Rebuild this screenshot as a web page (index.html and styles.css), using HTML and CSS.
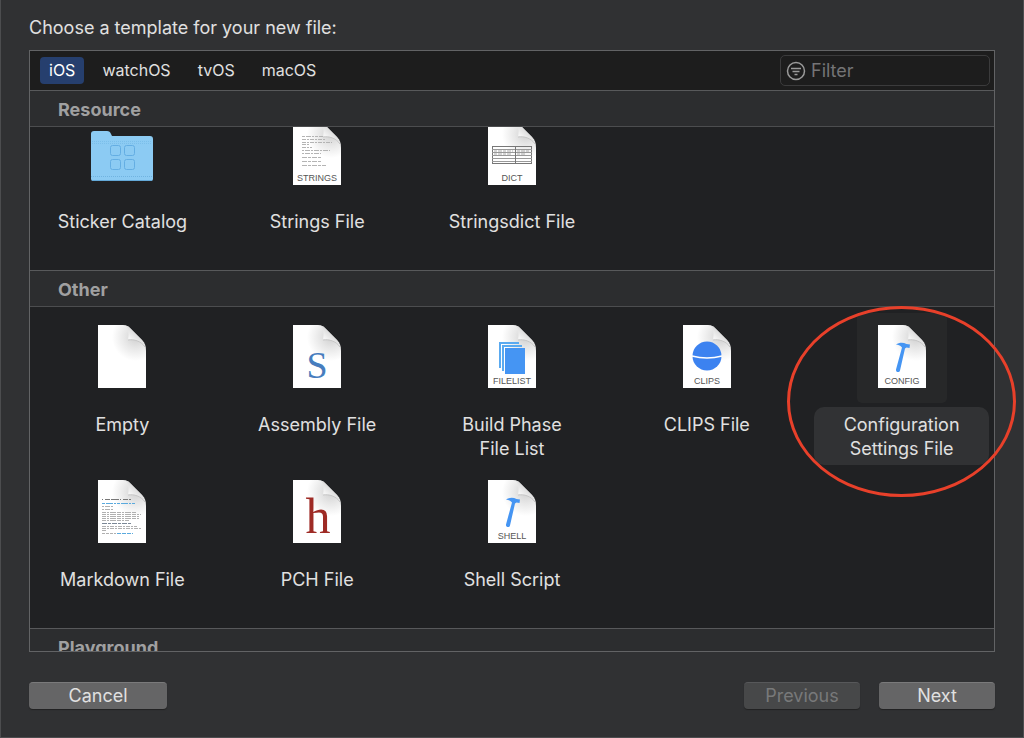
FILE: index.html
```html
<!DOCTYPE html>
<html lang="en">
<head>
<meta charset="utf-8">
<title>New File</title>
<link rel="stylesheet" href="styles.css">
</head>
<body>
<svg class="defs" aria-hidden="true">
  <defs>
    <linearGradient id="curl" x1="0" y1="1" x2="0.6" y2="0.3">
      <stop offset="0" stop-color="#ffffff"/>
      <stop offset="0.5" stop-color="#f4f4f4"/>
      <stop offset="1" stop-color="#d6d6d6"/>
    </linearGradient>
    <radialGradient id="shade" gradientUnits="userSpaceOnUse" cx="38" cy="12" r="24">
      <stop offset="0" stop-color="#cfcfcf"/>
      <stop offset="0.45" stop-color="#e6e6e6"/>
      <stop offset="1" stop-color="#ffffff"/>
    </radialGradient>
    <symbol id="page" viewBox="0 0 48 63">
      <path d="M0 0H25C29 0 31 2 33 4L44 15C47 18 48 21 48 26V63H0Z" fill="url(#shade)"/>
      <path d="M28 1C31 4 31 10 30 15C36 14 43 16 47 22C46 18 45 16 43 14L33 4C31 2 30 1 28 1Z" fill="url(#curl)"/>
      <path d="M30 15C36 14 43 16 47 22" fill="none" stroke="#c6c6c6" stroke-width="1"/>
    </symbol>
    <symbol id="hammer" viewBox="0 0 16 31">
      <path d="M1 2.500C4 0.500 8 0 11.500 2L15 2.500L14.500 6L11.500 5.500L10 6.500L5 28.500C4.500 31 0.500 30.500 1 27.500L7 5.500C5 3 3 3 1 2.500Z" fill="#4595f3"/>
    </symbol>
  </defs>
</svg>
<main class="dialog">
  <h1 class="title">Choose a template for your new file:</h1>
  <section class="panel">
    <div class="toolbar">
      <nav class="tabs">
        <button class="tab tab-active">iOS</button>
        <button class="tab">watchOS</button>
        <button class="tab">tvOS</button>
        <button class="tab">macOS</button>
      </nav>
      <label class="filter">
        <svg class="filter-icon" viewBox="0 0 20 20" aria-hidden="true">
          <circle cx="10" cy="10" r="8.5"/>
          <path d="M5 7.5H15M6.5 10.5H13.5M8.5 13.5H11.5"/>
        </svg>
        <input class="filter-input" type="text" placeholder="Filter" aria-label="Filter">
      </label>
    </div>

    <h2 class="heading">Resource</h2>
    <div class="group">
      <div class="grid grid-scrolled">
        <button class="tile">
          <span class="art">
            <svg class="folder" viewBox="0 0 64 50">
              <path d="M1 48V3Q1 0 4 0H17Q20 0 21 3L22 5H60Q63 5 63 8V48Q63 50 61 50H3Q1 50 1 48Z" fill="#8ccbf3"/>
              <path d="M2 10.500H62M2 12.500H62" stroke="#7bbfea" stroke-width="1" stroke-dasharray="1 1"/>
              <path d="M1 45.500H63" stroke="#70b3e0" stroke-width="1" stroke-dasharray="1 1"/>
              <path d="M2 49.500H62" stroke="#64a9d8" stroke-width="1"/>
              <g fill="none" stroke="#64aee3" stroke-width="1">
                <rect x="20.500" y="14.500" width="10" height="10" rx="2"/>
                <rect x="34.500" y="14.500" width="10" height="10" rx="2"/>
                <rect x="20.500" y="28.500" width="10" height="10" rx="2"/>
                <rect x="34.500" y="28.500" width="10" height="10" rx="2"/>
              </g>
            </svg>
          </span>
          <span class="label">Sticker Catalog</span>
        </button>
        <button class="tile">
          <span class="art">
            <svg class="doc" viewBox="0 0 48 63">
              <use href="#page" width="48" height="63"/>
              <g fill="none" stroke="#b4b4b4" stroke-width="1">
                <path d="M9 14.500H30" stroke-dasharray="3 1 5 1 2 1"/>
                <path d="M9 17.500H32M9 20.500H39M9 22.500H17M9 25.500H19" stroke-dasharray="4 1 2 1"/>
                <path d="M9 28.500H37M9 31.500H28" stroke-dasharray="2 1 5 1"/>
                <path d="M9 35.500H29M9 39.500H28M9 43.500H33" stroke-dasharray="5 1 3 1"/>
              </g>
              <text class="tag" x="24" y="59">STRINGS</text>
            </svg>
          </span>
          <span class="label">Strings File</span>
        </button>
        <button class="tile">
          <span class="art">
            <svg class="doc" viewBox="0 0 48 63">
              <use href="#page" width="48" height="63"/>
              <g fill="none" stroke="#777" stroke-width="1">
                <rect x="4.500" y="24.500" width="39" height="17"/>
                <path d="M4 27.500H44M4 30.500H44M4 33.500H44M4 36.500H44M4 39.500H44" stroke="#999"/>
                <path d="M27.500 24V42"/>
                <path d="M6 29H25M6 32H24M29 29H42M29 32H37" stroke="#aaa" stroke-dasharray="3 1 4 1"/>
              </g>
              <text class="tag" x="24" y="59">DICT</text>
            </svg>
          </span>
          <span class="label">Stringsdict File</span>
        </button>
      </div>
    </div>

    <h2 class="heading">Other</h2>
    <div class="group">
      <div class="grid">
        <button class="tile">
          <span class="art">
            <svg class="doc" viewBox="0 0 48 63"><use href="#page" width="48" height="63"/></svg>
          </span>
          <span class="label">Empty</span>
        </button>
        <button class="tile">
          <span class="art">
            <svg class="doc" viewBox="0 0 48 63">
              <use href="#page" width="48" height="63"/>
              <text class="letter letter-s" x="24" y="53">S</text>
            </svg>
          </span>
          <span class="label">Assembly File</span>
        </button>
        <button class="tile">
          <span class="art">
            <svg class="doc" viewBox="0 0 48 63">
              <use href="#page" width="48" height="63"/>
              <path d="M12 43V18H31M15 46V21H34" fill="none" stroke="#5aaaf0" stroke-width="2"/>
              <rect x="17" y="23" width="20" height="26" fill="#4595f3"/>
              <text class="tag" x="24" y="59">FILELIST</text>
            </svg>
          </span>
          <span class="label">Build Phase<br>File List</span>
        </button>
        <button class="tile">
          <span class="art">
            <svg class="doc" viewBox="0 0 48 63">
              <use href="#page" width="48" height="63"/>
              <circle cx="24" cy="31" r="14.500" fill="#3c82f0"/>
              <path d="M9 31Q24 35 39 31" fill="none" stroke="#fff" stroke-width="1.500"/>
              <text class="tag" x="24" y="59">CLIPS</text>
            </svg>
          </span>
          <span class="label">CLIPS File</span>
        </button>
        <button class="tile tile-selected">
          <span class="art">
            <svg class="doc" viewBox="0 0 48 63">
              <use href="#page" width="48" height="63"/>
              <use href="#hammer" x="17" y="17" width="16" height="31"/>
              <text class="tag" x="24" y="59">CONFIG</text>
            </svg>
          </span>
          <span class="label">Configuration<br>Settings File</span>
        </button>
        <button class="tile">
          <span class="art">
            <svg class="doc" viewBox="0 0 48 63">
              <use href="#page" width="48" height="63"/>
              <g fill="none" stroke="#b0b0b0" stroke-width="1">
                <path d="M4 19.500H33" stroke="#777" stroke-dasharray="1 2 5 1 8 1"/>
                <path d="M4 23.500H37" stroke="#5aaade" stroke-dasharray="3 1 7 1 2 1"/>
                <path d="M4 26.500H15M4 29.500H15" stroke-dasharray="2 1 5 1"/>
                <path d="M4 32.500H39M4 34.500H43M4 36.500H42M4 38.500H41M4 40.500H31" stroke-dasharray="4 1 2 1 6 1"/>
                <path d="M4 43.500H34" stroke="#7b8896" stroke-dasharray="5 1 3 1"/>
                <path d="M4 46.500H39M4 48.500H43M4 50.500H9" stroke-dasharray="4 1 2 1"/>
                <path d="M4 53.500H18" stroke-dasharray="3 1"/>
                <path d="M19 53.500H35" stroke="#5aaade" stroke-dasharray="4 1"/>
              </g>
            </svg>
          </span>
          <span class="label">Markdown File</span>
        </button>
        <button class="tile">
          <span class="art">
            <svg class="doc" viewBox="0 0 48 63">
              <use href="#page" width="48" height="63"/>
              <text class="letter letter-h" x="25" y="53">h</text>
            </svg>
          </span>
          <span class="label">PCH File</span>
        </button>
        <button class="tile">
          <span class="art">
            <svg class="doc" viewBox="0 0 48 63">
              <use href="#page" width="48" height="63"/>
              <use href="#hammer" x="17" y="17" width="16" height="31"/>
              <text class="tag" x="24" y="59">SHELL</text>
            </svg>
          </span>
          <span class="label">Shell Script</span>
        </button>
      </div>
    </div>

    <h2 class="heading">Playground</h2>
  </section>
  <footer class="footer">
    <button class="action action-cancel">Cancel</button>
    <button class="action" disabled>Previous</button>
    <button class="action">Next</button>
  </footer>
  <div class="marker"></div>
</main>
</body>
</html>
```

FILE: styles.css
```css
* {
  box-sizing: border-box;
}

body {
  margin: 0;
  background: #303133;
  color: #e0e0e0;
  font-family: Inter, "Liberation Sans", sans-serif;
  font-size: 18px;
  line-height: 24px;
}

button,
input {
  border: 0;
  padding: 0;
  background: none;
  color: inherit;
  font: inherit;
}

.defs {
  position: absolute;
  width: 0;
  height: 0;
}

.dialog {
  position: relative;
  display: flex;
  flex-direction: column;
  height: 100vh;
  min-width: 900px;
  padding: 16px 28px 28px;
  border: 1px solid #4c4d4f;
  border-top: 0;
}

.title {
  margin: 0 0 10px;
  font-size: 18px;
  font-weight: 400;
}

.panel {
  flex: 1;
  min-height: 0;
  overflow: hidden;
  border: 1px solid #626365;
  background: #202123;
}

.toolbar {
  display: flex;
  align-items: center;
  justify-content: space-between;
  height: 39px;
  padding: 0 4px 0 10px;
  background: #1d1d1d;
}

.tabs {
  display: flex;
  gap: 9px;
}

.tab {
  height: 27px;
  padding: 0 9px 2px;
  border-radius: 4px;
  font-size: 16px;
}

.tab-active {
  background: #263f6e;
  color: #fff;
}

.filter {
  display: flex;
  align-items: center;
  gap: 5px;
  width: 210px;
  height: 31px;
  padding: 0 5px;
  border: 1px solid #3b3b3c;
  border-radius: 5px;
}

.filter-icon {
  width: 20px;
  height: 20px;
  fill: none;
  stroke: #9a9a9a;
  stroke-width: 1.5;
}

.filter-input {
  flex: 1;
  min-width: 0;
}

.filter-input::placeholder {
  color: #747476;
  opacity: 1;
}

.heading {
  height: 37px;
  margin: 0;
  padding: 7px 28px 4px;
  border-top: 1px solid #58595b;
  border-bottom: 1px solid #4c4d4f;
  background: #2c2d2f;
  color: #a0a0a1;
  font-size: 18px;
  font-weight: 700;
}

.group {
  overflow: hidden;
}

.grid {
  display: grid;
  grid-template-columns: repeat(5, 1fr);
  gap: 3px 20px;
  padding: 6px 5px 32px;
}

.grid-scrolled {
  margin-top: -23px;
}

.tile {
  display: flex;
  flex-direction: column;
  align-items: center;
  gap: 4px;
}

.art {
  display: flex;
  align-items: flex-start;
  justify-content: center;
  width: 90px;
  height: 90px;
  padding-top: 12px;
  border-radius: 5px;
}

.doc {
  width: 48px;
  height: 63px;
}

.folder {
  width: 64px;
  height: 50px;
  margin-top: 9px;
}

.label {
  width: 100%;
  padding: 6px 5px 4px;
  border-radius: 10px;
}

.tile-selected .art {
  background: #272829;
}

.tile-selected .label {
  background: #313234;
}

.tag {
  fill: #555;
  font-family: "Liberation Sans", sans-serif;
  font-size: 9px;
  text-anchor: middle;
}

.letter {
  font-family: "Liberation Serif", serif;
  text-anchor: middle;
}

.letter-s {
  fill: #477dbe;
  font-size: 38px;
}

.letter-h {
  fill: #9e2b25;
  font-size: 50px;
}

.footer {
  display: flex;
  gap: 19px;
  margin-top: 30px;
}

.action {
  width: 116px;
  height: 27px;
  border-top: 1px solid #7a7a7b;
  border-radius: 4px;
  background: #656566;
  box-shadow: 0 1px 1px #222;
}

.action-cancel {
  width: 138px;
  margin-right: auto;
}

.action:disabled {
  border-top-color: #57585a;
  background: #474849;
  color: #78797a;
}

.marker {
  position: absolute;
  top: 306px;
  right: 7px;
  width: 229px;
  height: 191px;
  border: 3px solid #e8402a;
  border-radius: 50%;
  pointer-events: none;
}
```
